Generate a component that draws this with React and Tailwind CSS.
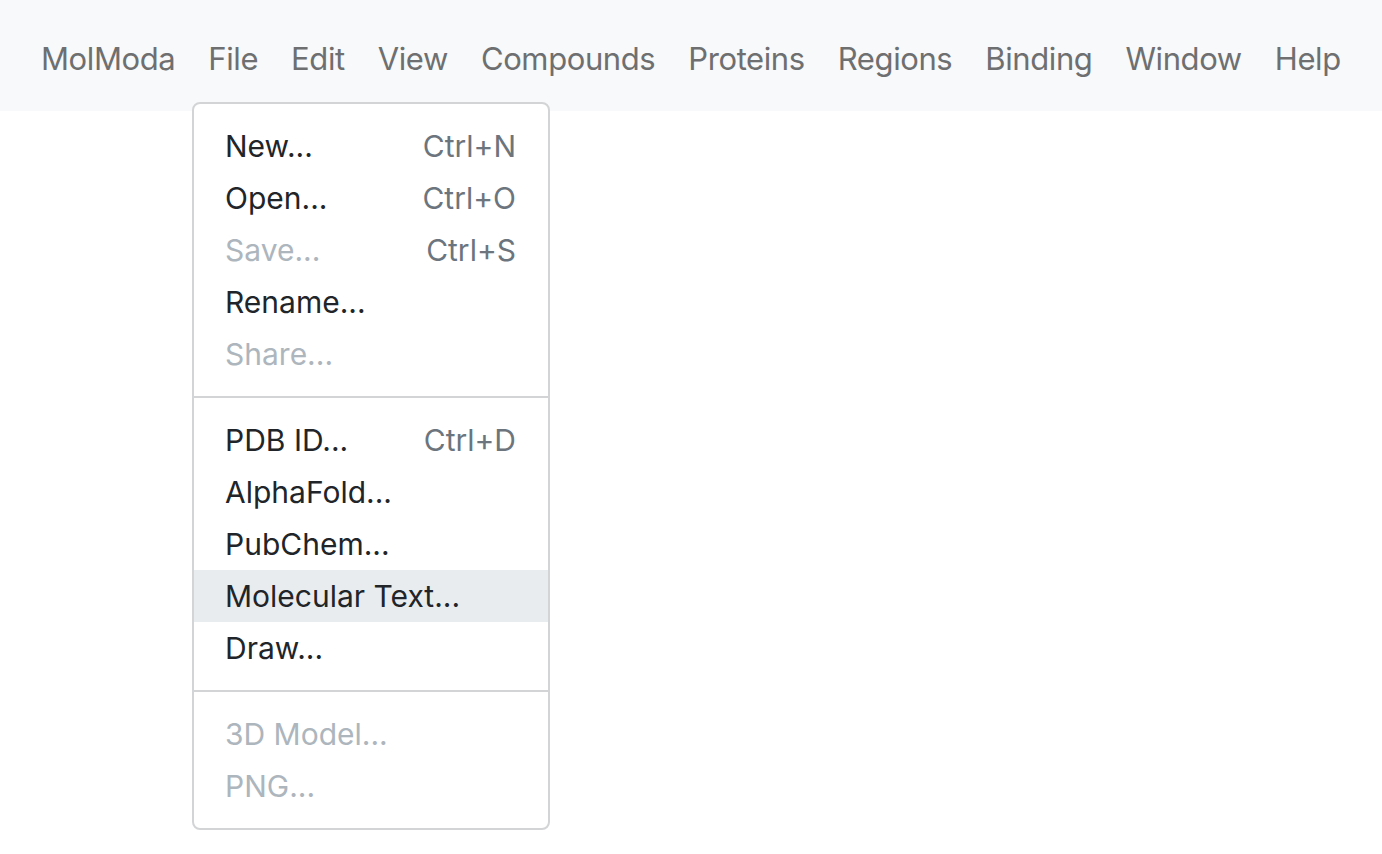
const NAV = ['MolModa', 'File', 'Edit', 'View', 'Compounds', 'Proteins', 'Regions', 'Binding', 'Window', 'Help'];

const GROUPS = [
  [
    { label: 'New...', key: 'Ctrl+N' },
    { label: 'Open...', key: 'Ctrl+O' },
    { label: 'Save...', key: 'Ctrl+S', disabled: true },
    { label: 'Rename...' },
    { label: 'Share...', disabled: true },
  ],
  [
    { label: 'PDB ID...', key: 'Ctrl+D' },
    { label: 'AlphaFold...' },
    { label: 'PubChem...' },
    { label: 'Molecular Text...', active: true },
    { label: 'Draw...' },
  ],
  [
    { label: '3D Model...', disabled: true },
    { label: 'PNG...', disabled: true },
  ],
];

function MenuItem({ item }) {
  return (
    <div
      className={`flex h-[52px] items-center justify-between pl-[31px] pr-8 ${item.active ? 'bg-[#e9ecef]' : ''} ${
        item.disabled ? 'text-[#adb5bd]' : 'text-[#212529]'
      }`}
    >
      <span>{item.label}</span>
      {item.key && <span className="text-[#6c757d]">{item.key}</span>}
    </div>
  );
}

export default function App() {
  return (
    <div className="min-h-[854px] w-full bg-white" style={{ fontFamily: 'Inter, "Noto Sans", sans-serif' }}>
      <nav className="relative flex h-[111px] items-center bg-[#f8f9fa] pl-[24.5px] pt-2">
        {NAV.map((n) => (
          <div key={n} className="px-[16.5px] text-[31px] tracking-[-0.4px] text-[#6e6f70]">
            {n}
          </div>
        ))}
        {/* File dropdown, open */}
        <div className="absolute left-[192px] top-[102px] z-10 w-[358px] rounded-lg border-2 border-[#d2d4d6] bg-white py-4 text-[30px] leading-[52px]">
          {GROUPS.map((g, gi) => (
            <div key={gi}>
              {gi > 0 && <div className="my-4 h-[2px] bg-[#d2d4d6]" />}
              {g.map((it) => (
                <MenuItem key={it.label} item={it} />
              ))}
            </div>
          ))}
        </div>
      </nav>
    </div>
  );
}
